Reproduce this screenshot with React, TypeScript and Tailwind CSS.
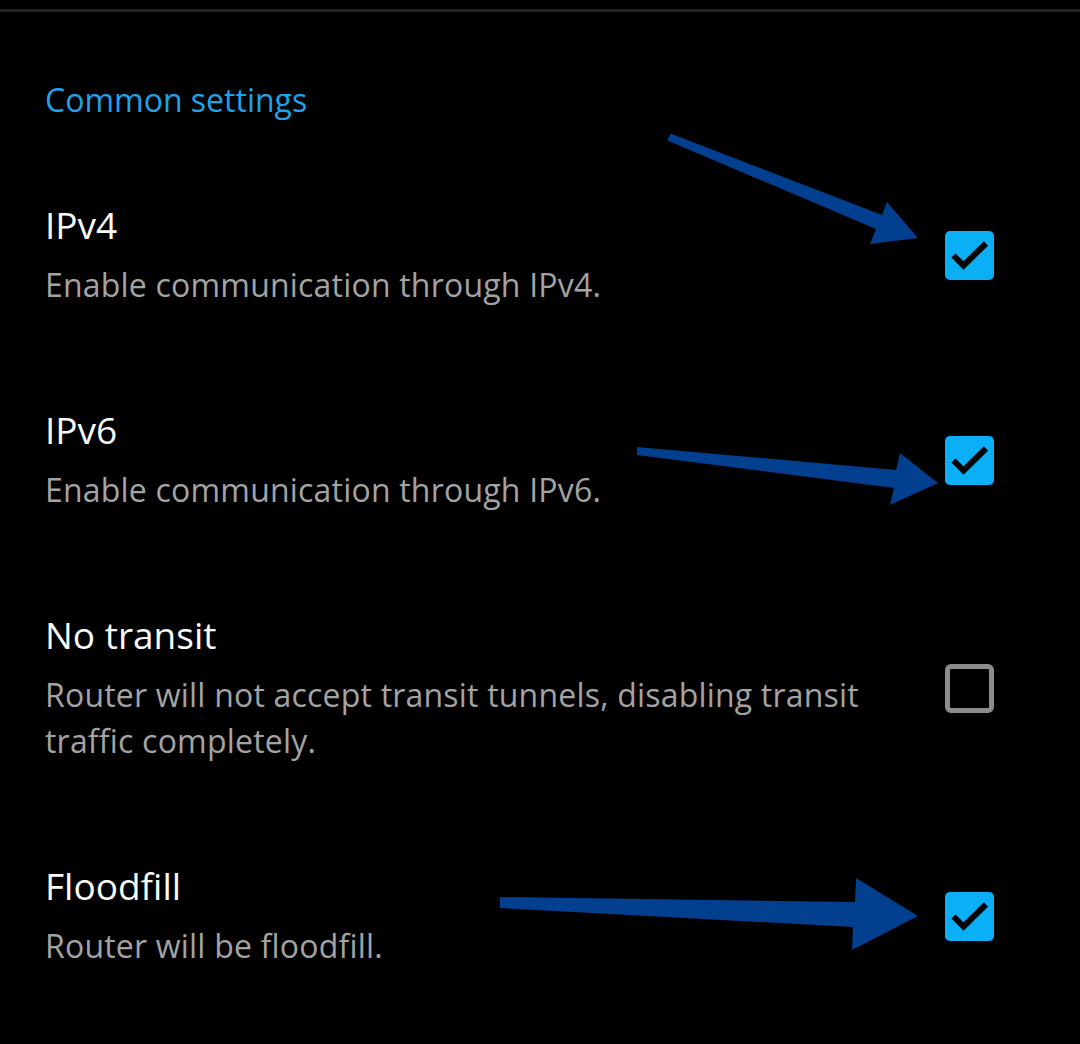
import React from 'react';

type Item = {
  title: string;
  lines: string[];
  checked: boolean;
};

const items: Item[] = [
  { title: 'IPv4', lines: ['Enable communication through IPv4.'], checked: true },
  { title: 'IPv6', lines: ['Enable communication through IPv6.'], checked: true },
  {
    title: 'No transit',
    lines: ['Router will not accept transit tunnels, disabling transit', 'traffic completely.'],
    checked: false,
  },
  { title: 'Floodfill', lines: ['Router will be floodfill.'], checked: true },
];

function CheckBox({ checked }: { checked: boolean }) {
  if (!checked) {
    return <div className="w-[49px] h-[49px] shrink-0 rounded-[6px] border-[5px] border-[#8c8c8c]" />;
  }
  return (
    <div className="w-[49px] h-[49px] shrink-0 rounded-[5px] bg-[#0aaff5] flex items-center justify-center">
      <svg width="49" height="49" viewBox="0 0 49 49">
        <path d="M8.5 24.5 L18.5 34.5 L41 12.5" fill="none" stroke="#050505" strokeWidth="6" />
      </svg>
    </div>
  );
}

function SettingRow({ item }: { item: Item }) {
  return (
    <div className="flex items-center justify-between py-[50px] pl-[45px] pr-[86px]">
      <div className="flex flex-col">
        <div className="text-[37px] leading-[44px] text-[#fafafa]">{item.title}</div>
        <div className="mt-[15px] text-[32px] leading-[46px] tracking-[0.2px] text-[#a3a3a3]">
          {item.lines.map((l) => (
            <div key={l} className="whitespace-nowrap">{l}</div>
          ))}
        </div>
      </div>
      <CheckBox checked={item.checked} />
    </div>
  );
}

export default function App() {
  return (
    <div className="relative w-[1080px] min-h-[1044px] bg-black font-['Open_Sans','Noto_Sans',sans-serif] overflow-hidden">
      <div className="pt-[9px]">
        <div className="h-[3px] bg-[#232323]" />
      </div>

      <div className="px-[45px] pt-[68px] pb-[33px]">
        <div className="text-[32px] leading-[40px] font-medium text-[#1fa3ea]">Common settings</div>
      </div>

      {items.map((it) => (
        <SettingRow key={it.title} item={it} />
      ))}

      {/* annotation arrows */}
      <svg className="absolute inset-0 pointer-events-none" width="1080" height="1044" viewBox="0 0 1080 1044">
        <g fill="#023f8f">
          <polygon points="670.5,133.5 882,215 887,202 918,238 870,244 876,229 667.5,140.5" />
          <polygon points="637,447 896,470 900,453 938,483 890,505 894,488 637,455" />
          <polygon points="500,897 855,902 856,878 918,916 852,950 853,927 500,908" />
        </g>
      </svg>
    </div>
  );
}
